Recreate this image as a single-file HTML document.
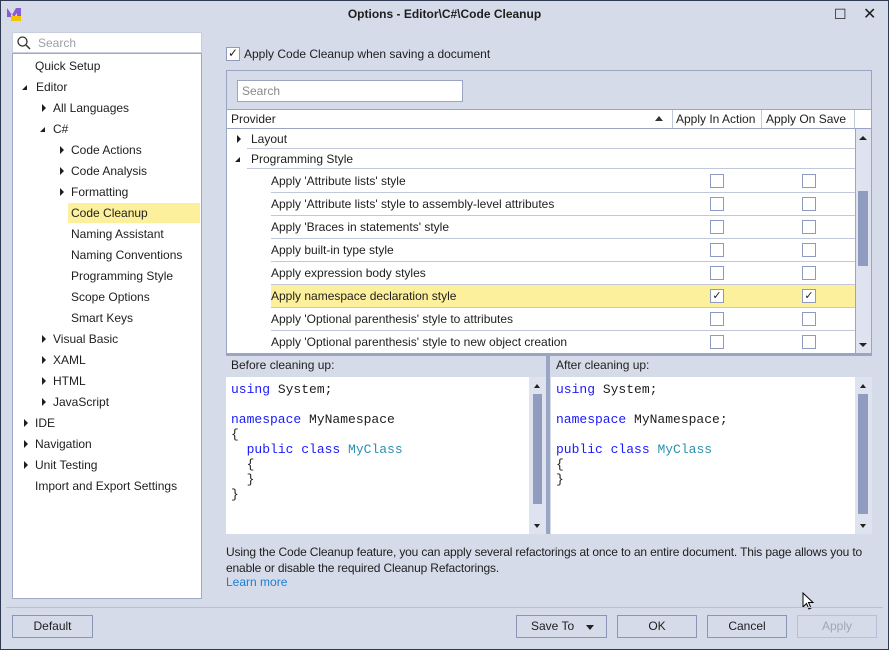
<!DOCTYPE html>
<html><head><meta charset="utf-8"><style>
*{box-sizing:border-box;margin:0;padding:0}
body{width:889px;height:650px;background:#d6dbe9;font-family:"Liberation Sans",sans-serif;font-size:12px;color:#1e1e1e;position:relative;overflow:hidden}
.a{position:absolute}
.frame{left:0;top:0;width:889px;height:650px;border:1px solid #2d3a52}
.title{left:0;top:4px;width:889px;text-align:center;font-size:12px;font-weight:bold;line-height:20px}
.box{background:#fff;border:1px solid #a0aac6}
.tree div{position:absolute;white-space:nowrap;line-height:20px;height:20px}
.tr{position:absolute;width:0;height:0;border-top:4px solid transparent;border-bottom:4px solid transparent;border-left:4px solid #1e1e1e}
.td{position:absolute;width:0;height:0;border-left:5px solid transparent;border-bottom:5px solid #1e1e1e}
.row{position:absolute;left:44px;width:584px;height:23px;border-bottom:1px solid #c0c8da;line-height:22px;padding-left:0}
.cb{position:absolute;width:14px;height:14px;border:1px solid #8e9ac0;background:#fff}
.code{font-family:"Liberation Mono",monospace;font-size:13px;line-height:15px;white-space:pre;position:absolute}
.k{color:#1a1aff}.t{color:#2b91af}
.sb{background:#dfe3ef}
.thumb{background:#909cbf}
.btn{position:absolute;top:615px;height:23px;border:1px solid #8b95b5;background:#d6dbe9;text-align:center;line-height:21px}
</style></head><body>
<div class="a frame"></div>
<svg class="a" style="left:6px;top:5px" width="17" height="17"><path d="M1 3 L6 10 L10 3 L15 3 L15 12 L11 12 L11 8 L8 12 L5 8 L5 12 L1 12Z" fill="#8b5bd6"/><rect x="5" y="11" width="10" height="5" fill="#f5c400"/></svg>
<div class="a title">Options - Editor\C#\Code Cleanup</div>
<div class="a" style="left:834px;top:6px;font-size:14px">☐</div>
<div class="a" style="left:863px;top:4px;font-size:16px">✕</div>

<div class="a box" style="left:12px;top:32px;width:190px;height:21px;border-color:#c8cede"></div>
<svg class="a" style="left:16px;top:35px" width="16" height="16"><circle cx="6.5" cy="6.5" r="4.5" stroke="#333" stroke-width="1.3" fill="none"/><path d="M10 10 L14 14" stroke="#333" stroke-width="1.5"/></svg>
<div class="a" style="left:38px;top:36px;color:#9aa0aa">Search</div>
<div class="a box" style="left:12px;top:53px;width:190px;height:546px"></div>
<div class="tree">
<div style="left:35px;top:56px">Quick Setup</div>
<span class="td" style="left:22px;top:85px"></span><div style="left:36px;top:77px">Editor</div>
<span class="tr" style="left:42px;top:104px"></span><div style="left:53px;top:98px">All Languages</div>
<span class="td" style="left:40px;top:127px"></span><div style="left:53px;top:119px">C#</div>
<span class="tr" style="left:60px;top:146px"></span><div style="left:71px;top:140px">Code Actions</div>
<span class="tr" style="left:60px;top:167px"></span><div style="left:71px;top:161px">Code Analysis</div>
<span class="tr" style="left:60px;top:188px"></span><div style="left:71px;top:182px">Formatting</div>
<div style="left:68px;top:203px;width:132px;background:#fdf09c;padding-left:3px">Code Cleanup</div>
<div style="left:71px;top:224px">Naming Assistant</div>
<div style="left:71px;top:245px">Naming Conventions</div>
<div style="left:71px;top:266px">Programming Style</div>
<div style="left:71px;top:287px">Scope Options</div>
<div style="left:71px;top:308px">Smart Keys</div>
<span class="tr" style="left:42px;top:335px"></span><div style="left:53px;top:329px">Visual Basic</div>
<span class="tr" style="left:42px;top:356px"></span><div style="left:53px;top:350px">XAML</div>
<span class="tr" style="left:42px;top:377px"></span><div style="left:53px;top:371px">HTML</div>
<span class="tr" style="left:42px;top:398px"></span><div style="left:53px;top:392px">JavaScript</div>
<span class="tr" style="left:24px;top:419px"></span><div style="left:35px;top:413px">IDE</div>
<span class="tr" style="left:24px;top:440px"></span><div style="left:35px;top:434px">Navigation</div>
<span class="tr" style="left:24px;top:461px"></span><div style="left:35px;top:455px">Unit Testing</div>
<div style="left:35px;top:476px">Import and Export Settings</div>
</div>

<div class="cb" style="left:226px;top:47px"></div>
<div class="a" style="left:228px;top:46px;font-size:12px">✓</div>
<div class="a" style="left:244px;top:47px">Apply Code Cleanup when saving a document</div>

<div class="a" style="left:226px;top:70px;width:646px;height:285px;border:1px solid #9aa5c3;background:#d6dbe9">
 <div class="a box" style="left:10px;top:9px;width:226px;height:22px;border-color:#9aa5c3"></div>
 <div class="a" style="left:15px;top:13px;color:#888">Search</div>
 <div class="a" style="left:0;top:38px;width:644px;height:20px;background:#fff;border-top:1px solid #9aa5c3;border-bottom:1px solid #9aa5c3;line-height:18px">
  <span class="a" style="left:4px">Provider</span>
  <span class="a" style="left:428px;top:6px;border-left:4px solid transparent;border-right:4px solid transparent;border-bottom:5px solid #333"></span>
  <span class="a" style="left:445px;top:0;height:18px;border-left:1px solid #c0c8da;padding-left:3px">Apply In Action</span>
  <span class="a" style="left:534px;top:0;height:18px;border-left:1px solid #c0c8da;padding-left:4px">Apply On Save</span>
  <span class="a" style="left:627px;top:0;height:18px;border-left:1px solid #c0c8da"></span>
 </div>
 <div class="a" style="left:0;top:58px;width:628px;height:225px;background:#fff;overflow:hidden">
  <span class="tr" style="left:10px;top:6px"></span>
  <div class="a" style="left:20px;top:0;width:608px;height:20px;border-bottom:1px solid #c0c8da;line-height:20px;padding-left:4px">Layout</div>
  <span class="td" style="left:8px;top:28px"></span>
  <div class="a" style="left:20px;top:20px;width:608px;height:20px;border-bottom:1px solid #c0c8da;line-height:20px;padding-left:4px">Programming Style</div>
  <div class="row" style="top:41px">Apply 'Attribute lists' style</div>
  <div class="row" style="top:64px">Apply 'Attribute lists' style to assembly-level attributes</div>
  <div class="row" style="top:87px">Apply 'Braces in statements' style</div>
  <div class="row" style="top:110px">Apply built-in type style</div>
  <div class="row" style="top:133px">Apply expression body styles</div>
  <div class="row" style="top:156px;background:#fdf09c">Apply namespace declaration style</div>
  <div class="row" style="top:179px">Apply 'Optional parenthesis' style to attributes</div>
  <div class="row" style="top:202px">Apply 'Optional parenthesis' style to new object creation</div>
  <div class="cb" style="left:483px;top:45px"></div><div class="cb" style="left:575px;top:45px"></div>
  <div class="cb" style="left:483px;top:68px"></div><div class="cb" style="left:575px;top:68px"></div>
  <div class="cb" style="left:483px;top:91px"></div><div class="cb" style="left:575px;top:91px"></div>
  <div class="cb" style="left:483px;top:114px"></div><div class="cb" style="left:575px;top:114px"></div>
  <div class="cb" style="left:483px;top:137px"></div><div class="cb" style="left:575px;top:137px"></div>
  <div class="cb" style="left:483px;top:160px;font-size:11px;line-height:12px;text-align:center">✓</div><div class="cb" style="left:575px;top:160px;font-size:11px;line-height:12px;text-align:center">✓</div>
  <div class="cb" style="left:483px;top:183px"></div><div class="cb" style="left:575px;top:183px"></div>
  <div class="cb" style="left:483px;top:206px"></div><div class="cb" style="left:575px;top:206px"></div>
 </div>
 <div class="a sb" style="left:628px;top:58px;width:16px;height:225px;border-left:1px solid #9aa5c3"></div>
 <div class="a" style="left:632px;top:65px;border-left:4px solid transparent;border-right:4px solid transparent;border-bottom:4px solid #222"></div>
 <div class="a thumb" style="left:631px;top:120px;width:10px;height:75px"></div>
 <div class="a" style="left:632px;top:272px;border-left:4px solid transparent;border-right:4px solid transparent;border-top:4px solid #222"></div>
</div>
<div class="a" style="left:226px;top:353px;width:646px;height:3px;background:#9aa5c3"></div>
<div class="a" style="left:546px;top:356px;width:4px;height:178px;background:#9aa5c3"></div>

<div class="a" style="left:231px;top:358px">Before cleaning up:</div>
<div class="a" style="left:556px;top:358px">After cleaning up:</div>
<div class="a" style="left:226px;top:377px;width:320px;height:157px;background:#fff"></div>
<div class="a" style="left:551px;top:377px;width:321px;height:157px;background:#fff"></div>
<div class="code" style="left:231px;top:382px"><span class="k">using</span> System;

<span class="k">namespace</span> MyNamespace
{
  <span class="k">public class</span> <span class="t">MyClass</span>
  {
  }
}</div>
<div class="code" style="left:556px;top:382px"><span class="k">using</span> System;

<span class="k">namespace</span> MyNamespace;

<span class="k">public class</span> <span class="t">MyClass</span>
{
}</div>
<div class="a sb" style="left:529px;top:377px;width:17px;height:157px"></div>
<div class="a thumb" style="left:533px;top:394px;width:9px;height:110px"></div>
<div class="a" style="left:534px;top:384px;border-left:3px solid transparent;border-right:3px solid transparent;border-bottom:4px solid #222"></div>
<div class="a" style="left:534px;top:524px;border-left:3px solid transparent;border-right:3px solid transparent;border-top:4px solid #222"></div>
<div class="a sb" style="left:855px;top:377px;width:17px;height:157px"></div>
<div class="a thumb" style="left:858px;top:394px;width:10px;height:120px"></div>
<div class="a" style="left:860px;top:384px;border-left:3px solid transparent;border-right:3px solid transparent;border-bottom:4px solid #222"></div>
<div class="a" style="left:860px;top:524px;border-left:3px solid transparent;border-right:3px solid transparent;border-top:4px solid #222"></div>

<div class="a" style="left:226px;top:544px;width:660px;line-height:16px;letter-spacing:-0.15px">Using the Code Cleanup feature, you can apply several refactorings at once to an entire document. This page allows you to enable or disable the required Cleanup Refactorings.</div>
<div class="a" style="left:226px;top:575px;color:#1a7fd4">Learn more</div>

<svg class="a" style="left:802px;top:592px" width="14" height="20"><path d="M1 1 L1 15 L4.5 11.5 L7 17 L9 16 L6.5 10.5 L11 10.5Z" fill="#fff" stroke="#000"/></svg>

<div class="a" style="left:6px;top:607px;width:877px;height:1px;background:#b8c0d6"></div>
<div class="btn" style="left:12px;width:81px">Default</div>
<div class="btn" style="left:516px;width:91px;text-align:left;padding-left:14px">Save To <span class="a" style="left:69px;top:9px;border-left:4px solid transparent;border-right:4px solid transparent;border-top:5px solid #222"></span></div>
<div class="btn" style="left:617px;width:80px">OK</div>
<div class="btn" style="left:707px;width:80px">Cancel</div>
<div class="btn" style="left:797px;width:80px;color:#a0a6b4;border-color:#b8c0d6">Apply</div>
</body></html>
